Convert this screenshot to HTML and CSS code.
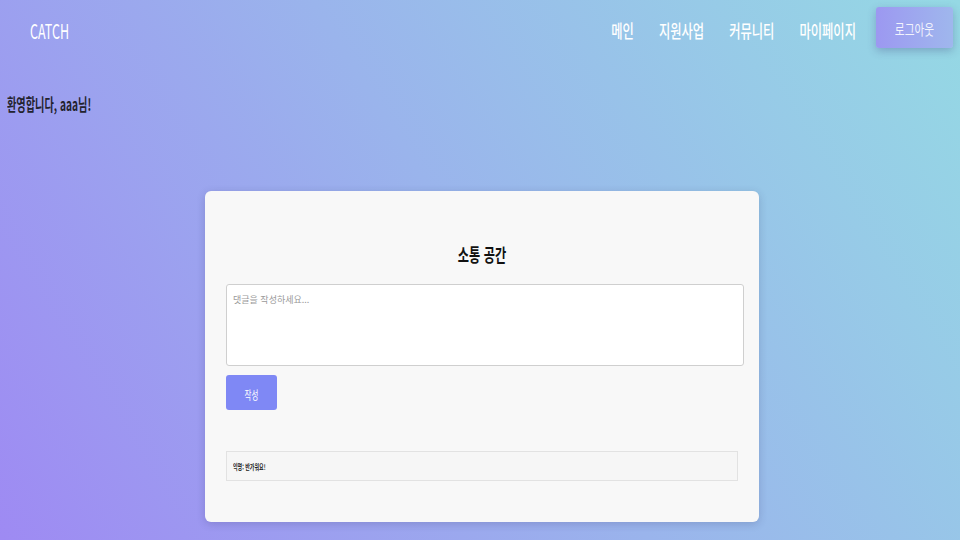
FILE: index.html
```html
<!DOCTYPE html>
<html lang="ko">
<head>
<meta charset="utf-8">
<title>CATCH</title>
<link rel="stylesheet" href="styles.css">
</head>
<body>
<header class="header">
  <span class="logo">CATCH</span>
  <nav class="nav">
    <a class="nav-link" href="#">메인</a>
    <a class="nav-link" href="#">지원사업</a>
    <a class="nav-link" href="#">커뮤니티</a>
    <a class="nav-link" href="#">마이페이지</a>
  </nav>
  <button class="logout"><span class="logout-text">로그아웃</span></button>
</header>
<p class="welcome"><span class="welcome-text">환영합니다, aaa님!</span></p>
<main class="main">
  <section class="card">
    <h2 class="title"><span class="title-text">소통 공간</span></h2>
    <textarea class="input" placeholder="댓글을 작성하세요..."></textarea>
    <button class="submit"><span class="submit-text">작성</span></button>
    <div class="comment"><span class="comment-text">익명: 반가워요!</span></div>
  </section>
</main>
</body>
</html>
```
FILE: styles.css
```css
* { box-sizing: border-box; }
html, body { height: 100%; }
body {
  margin: 0;
  font-family: "Noto Sans CJK KR", "Noto Sans", sans-serif;
  background: linear-gradient(58deg, #9e8af3 0%, #9ab4ec 50%, #95d9e4 100%);
  overflow: hidden;
}
.header {
  height: 63px;
  display: flex;
  align-items: center;
  padding: 0 7px 0 30px;
}
.logo {
  display: inline-block;
  color: #fff;
  font-size: 12.5px;
  line-height: 1;
  transform: scaleY(1.65);
  margin-right: auto;
}
.nav {
  display: flex;
  gap: 25px;
}
.nav-link {
  display: inline-block;
  color: #fff;
  text-decoration: none;
  font-size: 12.3px;
  font-weight: 500;
  line-height: 1;
  transform: scaleY(1.45);
}
.logout {
  align-self: flex-start;
  margin: 7px 0 0 20px;
  width: 77px;
  height: 41px;
  border: none;
  border-radius: 3px;
  background: linear-gradient(90deg, #9c98f1, #9fb7ed);
  box-shadow: 0 3px 8px rgba(60, 60, 120, 0.3);
  font-family: inherit;
  padding: 0;
}
.logout-text {
  display: inline-block;
  color: rgba(255, 255, 255, 0.88);
  font-size: 10.7px;
  font-weight: 400;
  transform: scaleY(1.4);
}
.welcome {
  margin: 29px 0 0 7px;
  line-height: 20px;
  height: 20px;
}
.welcome-text {
  display: inline-block;
  font-size: 10.2px;
  font-weight: 700;
  color: #23232e;
  transform: scaleY(1.62);
}
.main {
  padding: 79px 0 0 4px;
}
.card {
  width: 554px;
  margin: 0 auto;
  background: #f8f8f8;
  border-radius: 6px;
  box-shadow: 0 2px 8px rgba(40, 40, 90, 0.2);
  padding: 34px 21px 41px;
}
.title {
  margin: 0 0 11px;
  height: 48px;
  line-height: 48px;
  text-align: center;
}
.title-text {
  display: inline-block;
  font-size: 12.2px;
  font-weight: 700;
  color: #111;
  transform: scaleY(1.52);
}
.input {
  display: block;
  width: 518px;
  height: 82px;
  border: 1px solid #cfcfcf;
  border-radius: 3px;
  background: #fff;
  padding: 8px 6px;
  font-family: inherit;
  font-size: 9px;
  resize: none;
}
.input::placeholder { color: #9a9a9a; }
.submit {
  display: block;
  margin-top: 9px;
  width: 51px;
  height: 35px;
  border: none;
  border-radius: 3px;
  background: #7f88f5;
  padding: 0;
  font-family: inherit;
}
.submit-text {
  display: inline-block;
  color: #fff;
  font-size: 7.5px;
  transform: scaleY(1.6);
}
.comment {
  margin-top: 41px;
  width: 512px;
  height: 30px;
  border: 1px solid #e2e2e2;
  background: #f6f6f6;
  display: flex;
  align-items: center;
  padding-left: 6px;
}
.comment-text {
  display: inline-block;
  font-size: 5px;
  font-weight: 700;
  color: #222;
  transform: scaleY(1.5);
}
```
